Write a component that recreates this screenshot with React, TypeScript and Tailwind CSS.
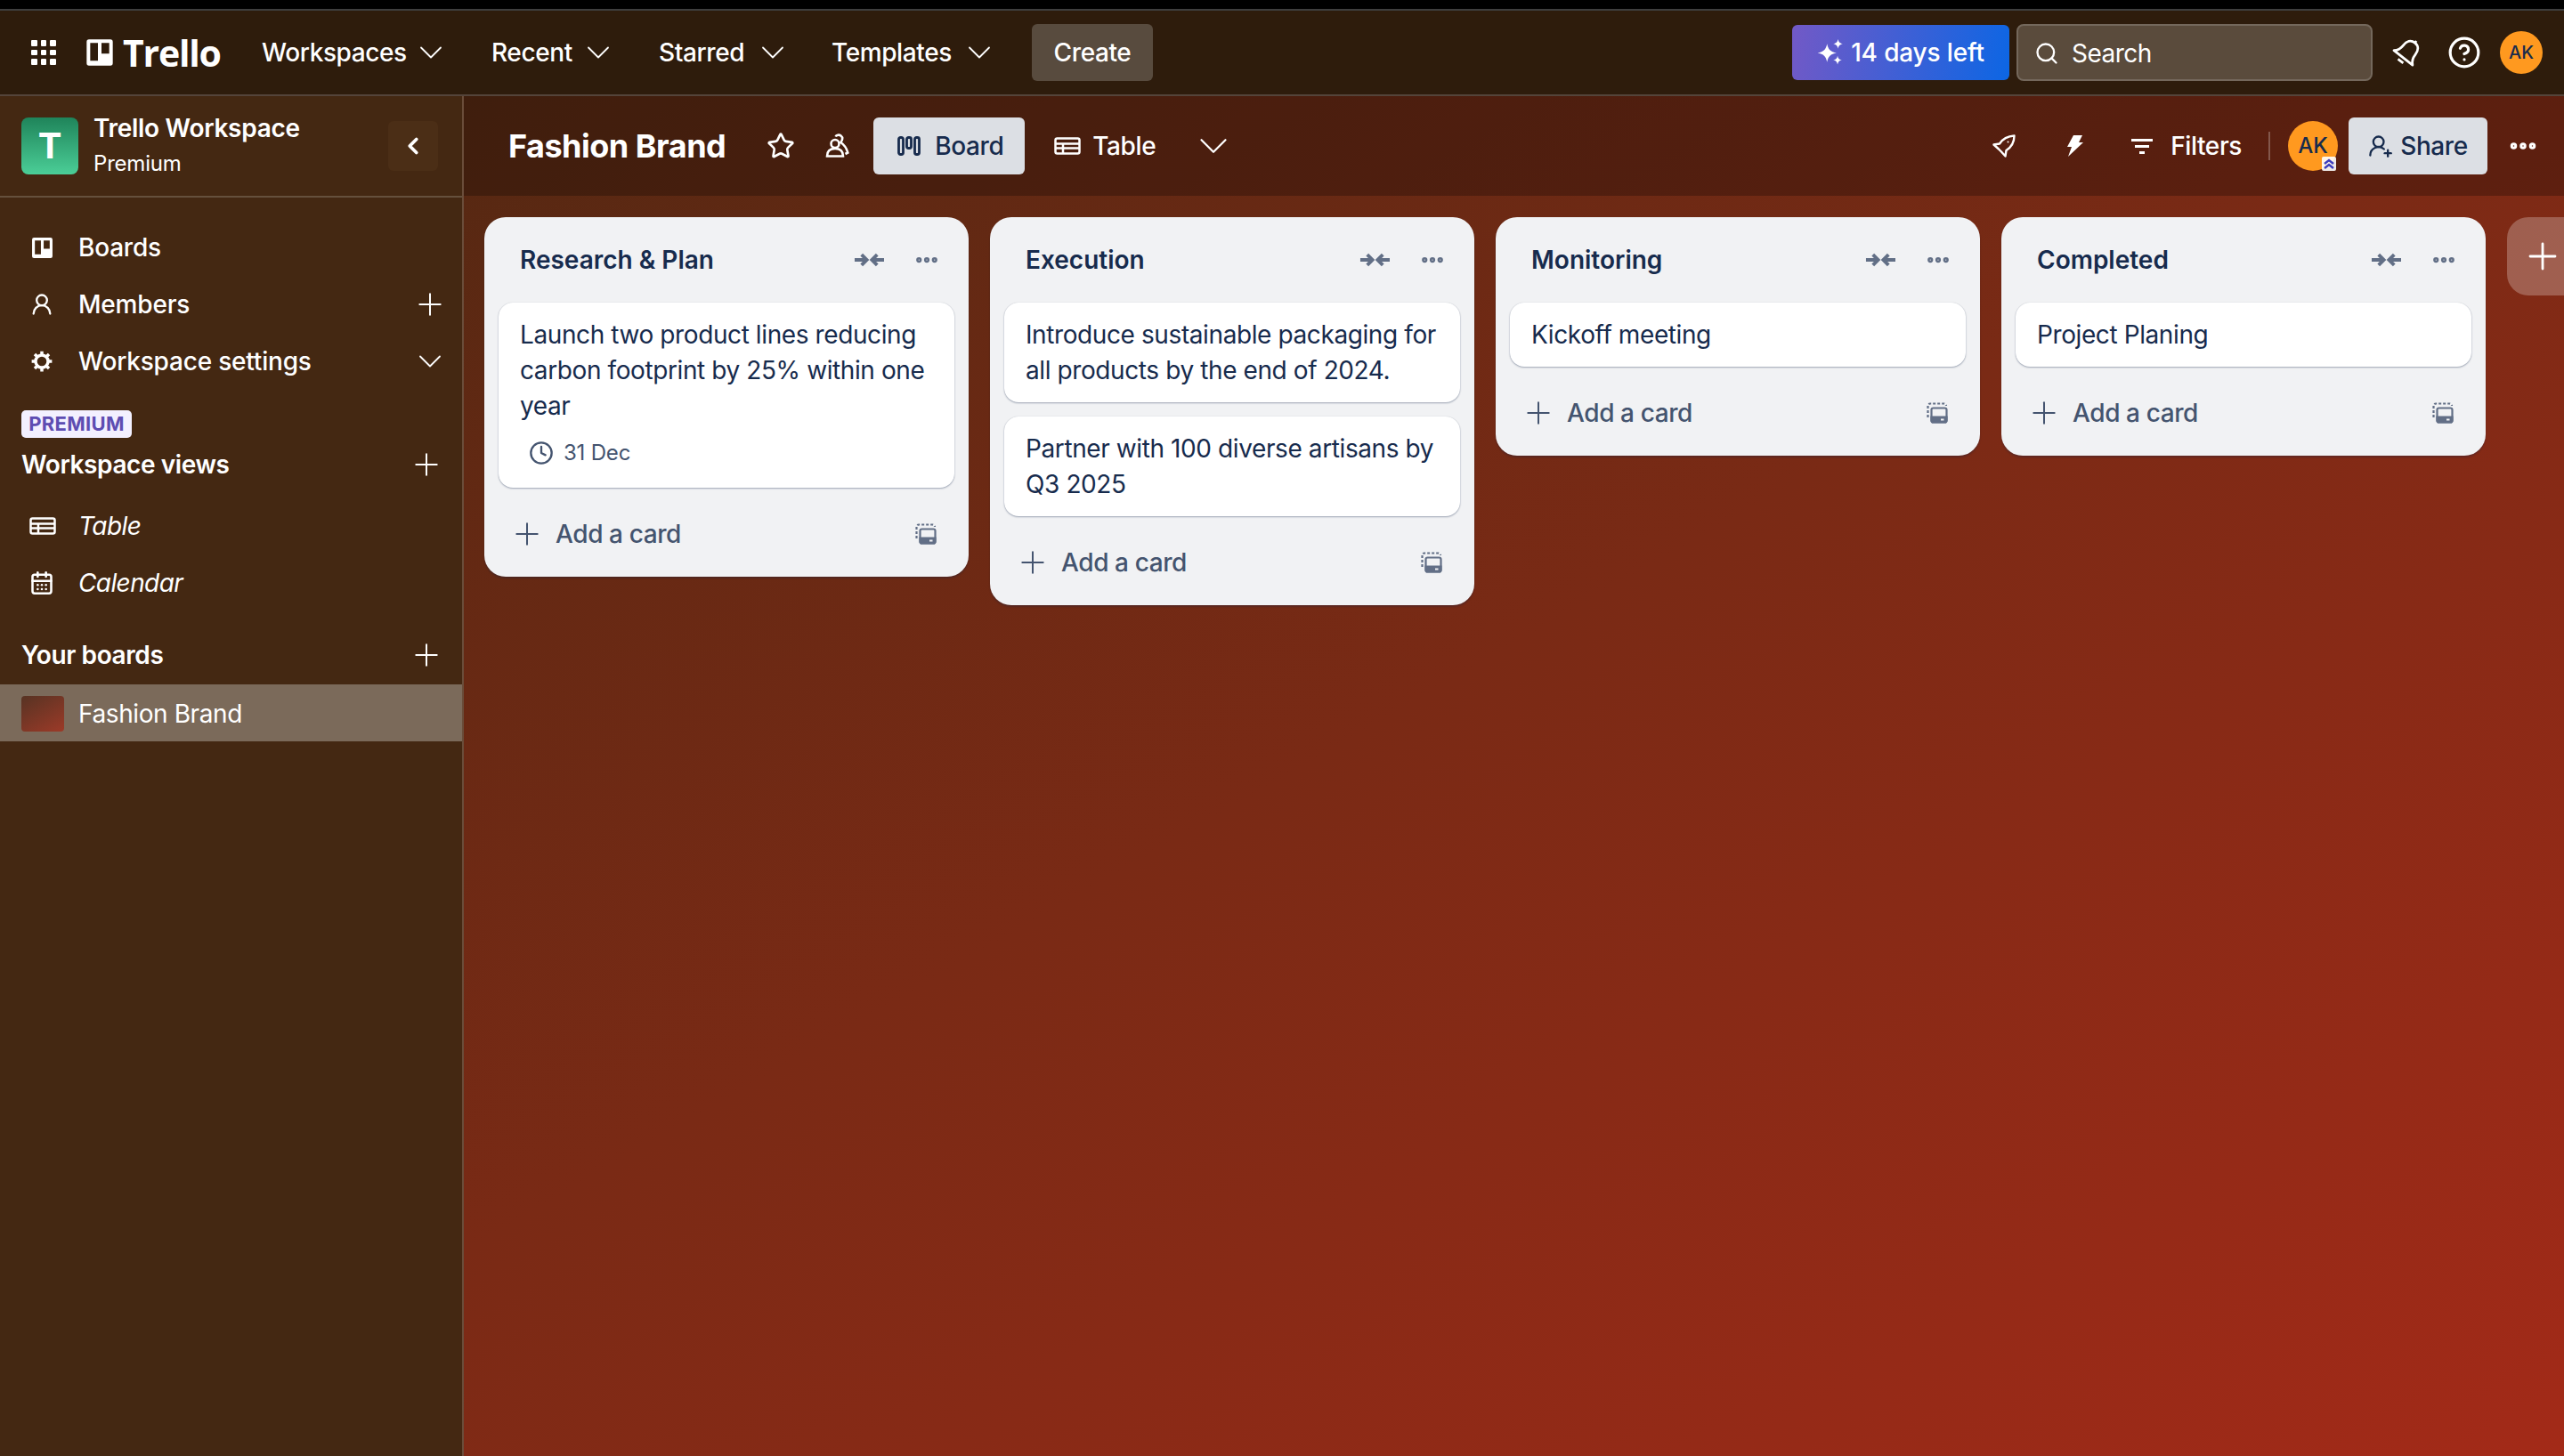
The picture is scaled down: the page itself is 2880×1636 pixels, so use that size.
import React from 'react';
import { ChevronDown, ChevronLeft, CircleHelp, Clock, Ellipsis, Plus, Search, Star, UserRound, UserRoundPlus, CalendarDays } from 'lucide-react';

const BoardsIcon = ({ className }: { className?: string }) => (
  <svg viewBox="0 0 24 24" className={className} fill="currentColor">
    <path
      fillRule="evenodd"
      d="M3 1h18a2 2 0 0 1 2 2v18a2 2 0 0 1-2 2H3a2 2 0 0 1-2-2V3a2 2 0 0 1 2-2Zm1 3v15h6.500V4H4Zm9.500 0v9H20V4h-6.500Z"
    />
  </svg>
);

const AppGrid = () => (
  <div className="grid grid-cols-3 gap-[4px] w-[28px]">
    {Array.from({ length: 9 }).map((_, i) => (
      <div key={i} className="w-[6.500px] h-[6.500px] rounded-[1px] bg-white" />
    ))}
  </div>
);

const TableIcon = ({ className }: { className?: string }) => (
  <svg viewBox="0 0 30 20" className={className} fill="none" stroke="currentColor" strokeWidth="2.500">
    <rect x="1.500" y="1.500" width="27" height="17" rx="2" />
    <path d="M1.500 7.500h27M1.500 12.500h27M10 7.500v11" />
  </svg>
);

const ColumnsIcon = ({ className }: { className?: string }) => (
  <svg viewBox="0 0 26 22" className={className} fill="none" stroke="currentColor" strokeWidth="2.800">
    <rect x="1.500" y="1.500" width="5" height="19" rx="2" />
    <rect x="10.500" y="1.500" width="5" height="12" rx="2" />
    <rect x="19.500" y="1.500" width="5" height="19" rx="2" />
  </svg>
);

const CollapseIcon = () => (
  <svg viewBox="0 0 36 18" className="w-[35px] h-[18px] text-[#626f86]" fill="none" stroke="currentColor" strokeWidth="4">
    <path d="M1 9h14M9 3 15 9l-6 6M35 9H21M27 3 21 9l6 6" />
  </svg>
);

const TemplateIcon = () => (
  <svg viewBox="0 0 24 24" className="w-[24px] h-[24px] text-[#626f86]" fill="none" stroke="currentColor" strokeWidth="2.200">
    <path d="M1.500 17V4A2.500 2.500 0 0 1 4 1.500h15.500A2.500 2.500 0 0 1 22 4" strokeDasharray="3 2" />
    <rect x="5.500" y="6.500" width="17" height="16" rx="2" />
    <path d="M5.500 16.500h17v4a2 2 0 0 1-2 2h-13a2 2 0 0 1-2-2z" fill="currentColor" />
    <rect x="16" y="18.500" width="3.500" height="2" fill="#f1f2f4" stroke="none" />
  </svg>
);

const SparkleIcon = () => (
  <svg viewBox="0 0 28 28" className="w-[30px] h-[30px]" fill="white">
    <path d="M10.500 5c1.200 6 3.500 8.300 10 9.500-6.500 1.200-8.800 3.500-10 9.500-1.200-6-3.500-8.300-10-9.500 6.500-1.200 8.800-3.500 10-9.500Z" />
    <path d="M22 0c.6 3 1.800 4.200 5 5-3.200.8-4.400 2-5 5-.6-3-1.800-4.200-5-5 3.200-.8 4.400-2 5-5ZM21.500 17.500c.6 2.800 1.700 3.900 4.500 4.500-2.800.6-3.900 1.700-4.500 4.500-.6-2.800-1.700-3.900-4.500-4.500 2.800-.6 3.900-1.700 4.500-4.500Z" />
  </svg>
);

const BellIcon = () => (
  <svg viewBox="0 0 32 32" className="ml-[22px] w-[34px] h-[34px] text-white" fill="none" stroke="currentColor" strokeWidth="2.600" strokeLinejoin="round">
    <g transform="rotate(38 16 16)">
      <path d="M16 3c-5.500 0-8 4-8 9.500 0 5.500-1.500 8-4.500 10.500h25c-3-2.500-4.500-5-4.500-10.500C24 7 21.500 3 16 3Z" />
      <path d="M16 3V0.500" />
      <path d="M12.500 27.500h7" />
    </g>
  </svg>
);

const PeopleIcon = () => (
  <svg viewBox="0 0 28 28" className="ml-[34px] w-[28px] h-[28px]" fill="none" stroke="currentColor" strokeWidth="2.600">
    <circle cx="11" cy="11.500" r="4.500" />
    <path d="M2 25.500c0-6 3-8.500 9-8.500s9 2.500 9 8.500H2Z" />
    <path d="M11.500 3.500c1-2 4-2.500 6-1 2.500 1.800 2 5-.2 7.500 4.500 3 6.500 6 8 11.500l-2.800 1.500" />
  </svg>
);

const RocketIcon = () => (
  <svg viewBox="0 0 26 26" className="w-[26px] h-[26px]" fill="none" stroke="currentColor" strokeWidth="2.400" strokeLinejoin="round">
    <path d="M24.500 1.500C17 2 11.500 5 8 10.500L1.500 11.500 7 16.500 10 19.500 14.500 24.500 15.500 18C21 14.500 24.500 9 24.500 1.500Z" />
    <circle cx="17.500" cy="8.500" r="1" fill="currentColor" stroke="none" />
  </svg>
);

const BoltIcon = () => (
  <svg viewBox="0 0 18 24" className="ml-[58px] w-[18px] h-[24px]" fill="currentColor">
    <path d="M7 0h10l-4 8h5L1 24l4-11H0L7 0Z" />
  </svg>
);

const GearIcon = () => (
  <svg viewBox="0 0 24 24" className="w-[26px] h-[26px] ml-[-1px]" fill="none" stroke="currentColor">
    <circle cx="12" cy="12" r="6.500" strokeWidth="3.200" />
    <path
      d="M12 1.500v3.500M12 19v3.500M1.500 12H5M19 12h3.500M4.600 4.600l2.400 2.400M17 17l2.400 2.400M4.600 19.400 7 17M17 7l2.400-2.400"
      strokeWidth="3.200"
    />
  </svg>
);

const NavItem = ({ label, width }: { label: string; width: string }) => (
  <div className={`flex items-center justify-between text-[28px] leading-[40px] font-medium text-white ${width}`}>
    <span className="tracking-[-0.4px]">{label}</span>
    <ChevronDown className="w-[44px] h-[44px] mr-[-10px]" strokeWidth={1} />
  </div>
);

const SideRow = ({
  icon,
  label,
  action,
  italic,
}: {
  icon: React.ReactNode;
  label: string;
  action?: React.ReactNode;
  italic?: boolean;
}) => (
  <div className="h-[64px] pl-[35px] pr-[16px] flex items-center text-[28px] leading-[40px] text-white">
    <div className="w-[53px] flex items-center">{icon}</div>
    <span className={italic ? 'italic tracking-[-0.6px]' : 'font-medium tracking-[-0.2px]'}>{label}</span>
    <div className="ml-auto">{action}</div>
  </div>
);

type CardData = { text: string[]; due?: string };
type ListData = { title: string; cards: CardData[] };

const lists: ListData[] = [
  {
    title: 'Research & Plan',
    cards: [
      {
        text: ['Launch two product lines reducing', 'carbon footprint by 25% within one', 'year'],
        due: '31 Dec',
      },
    ],
  },
  {
    title: 'Execution',
    cards: [
      { text: ['Introduce sustainable packaging for', 'all products by the end of 2024.'] },
      { text: ['Partner with 100 diverse artisans by', 'Q3 2025'] },
    ],
  },
  { title: 'Monitoring', cards: [{ text: ['Kickoff meeting'] }] },
  { title: 'Completed', cards: [{ text: ['Project Planing'] }] },
];

const BoardList = ({ list }: { list: ListData }) => (
  <div className="w-[544px] shrink-0 rounded-[24px] bg-[#f1f2f4] px-[16px] shadow-[0_2px_2px_rgba(9,30,66,0.25)]">
    <div className="h-[96px] flex items-center pl-[24px] pr-[16px]">
      <h2 className="text-[28px] leading-[40px] font-semibold text-[#172b4d]">{list.title}</h2>
      <div className="ml-auto mr-[32px]">
        <CollapseIcon />
      </div>
      <Ellipsis className="w-[30px] h-[30px] text-[#626f86]" strokeWidth={3} />
    </div>
    <div className="flex flex-col gap-[16px]">
      {list.cards.map(card => (
        <div
          key={card.text[0]}
          className="rounded-[16px] bg-white px-[24px] py-[16px] shadow-[0_1px_2px_rgba(9,30,66,0.35),0_0_1px_rgba(9,30,66,0.2)]"
        >
          <p className="text-[28px] leading-[40px] text-[#172b4d] whitespace-nowrap tracking-[-0.4px]">
            {card.text.map(line => (
              <span key={line} className="block">
                {line}
              </span>
            ))}
          </p>
          {card.due && (
            <div className="mt-[13px] mb-[3px] pl-[10px] h-[40px] flex items-center gap-[11px] text-[24px] text-[#44546f] tracking-[-0.2px]">
              <Clock className="w-[28px] h-[28px]" strokeWidth={2} />
              {card.due}
            </div>
          )}
        </div>
      ))}
    </div>
    <div className="h-[100px] pt-[4px] flex items-center pl-[12px] pr-[20px] text-[#44546f]">
      <Plus className="w-[40px] h-[40px] mr-[12px]" strokeWidth={1.2} />
      <span className="text-[28px] font-medium tracking-[-0.4px]">Add a card</span>
      <div className="ml-auto">
        <TemplateIcon />
      </div>
    </div>
  </div>
);

export default function App() {
  return (
    <div className="w-[2880px] h-[1636px] flex flex-col overflow-hidden bg-black font-['Inter',sans-serif]">
      <div className="h-[12px] shrink-0 bg-black border-b-2 border-[#3e3e3e]" />

      <header className="h-[96px] shrink-0 flex items-center bg-[#2e1c0c] border-b-2 border-[#54443a] pl-[35px] pr-[24px]">
        <AppGrid />
        <BoardsIcon className="ml-[33px] w-[32px] h-[40px] text-white" />
        <span className="ml-[10px] w-[156px] font-['Open_Sans',sans-serif] text-[41px] leading-[48px] font-bold text-white tracking-[-1.2px]">
          Trello
        </span>
        <div className="flex items-center">
          <NavItem label="Workspaces" width="w-[202px]" />
          <div className="w-[56px]" />
          <NavItem label="Recent" width="w-[132px]" />
          <div className="w-[56px]" />
          <NavItem label="Starred" width="w-[140px]" />
          <div className="w-[54px]" />
          <NavItem label="Templates" width="w-[178px]" />
        </div>
        <button className="ml-[47px] w-[136px] h-[64px] rounded-[6px] bg-[#584b3e] text-[28px] font-medium text-white tracking-[-0.4px]">
          Create
        </button>

        <div className="ml-auto flex items-center">
          <div className="w-[244px] h-[62px] rounded-[6px] flex items-center justify-center gap-[8px] bg-[linear-gradient(100deg,#7259c6,#0c66e4)] text-[28px] font-medium text-white tracking-[-0.15px]">
            <SparkleIcon />
            14 days left
          </div>
          <div className="ml-[8px] w-[400px] h-[64px] rounded-[8px] border-2 border-[#74685c] bg-[#5a4b3c] flex items-center pl-[18px] pt-[2px] text-[28px] text-white">
            <Search className="w-[28px] h-[28px]" strokeWidth={2} />
            <span className="ml-[14px] tracking-[-0.5px]">Search</span>
          </div>
          <BellIcon />
          <CircleHelp className="ml-[28px] w-[38px] h-[38px] text-white" strokeWidth={2} />
          <div className="ml-[21px] w-[48px] h-[48px] rounded-full bg-[#ff991f] flex items-center justify-center text-[20px] font-medium text-[#172b4d]">
            AK
          </div>
        </div>
      </header>

      <div className="flex-1 flex min-h-0">
        <aside className="w-[521px] shrink-0 bg-[#442812] border-r-2 border-[#6a4d3a]">
          <div className="h-[114px] border-b-2 border-[#65503c] flex items-center pl-[24px] pr-[27px]">
            <div className="w-[64px] h-[64px] rounded-[8px] bg-[linear-gradient(180deg,#1f845a,#4bce97)] flex items-center justify-center text-[40px] font-bold text-white">
              T
            </div>
            <div className="ml-[17px] mt-[-2px] text-white">
              <div className="text-[28px] leading-[40px] font-semibold tracking-[-0.3px]">Trello Workspace</div>
              <div className="mt-[2px] text-[24px] leading-[36px] tracking-[-0.2px]">Premium</div>
            </div>
            <div className="ml-auto w-[56px] h-[56px] rounded-[6px] bg-[#4b2e16] flex items-center justify-center">
              <ChevronLeft className="w-[30px] h-[30px] text-white" strokeWidth={3} />
            </div>
          </div>

          <div className="pt-[24px]">
            <SideRow icon={<BoardsIcon className="w-[25px] h-[25px]" />} label="Boards" />
            <SideRow
              icon={<UserRound className="w-[28px] h-[28px] ml-[-2px]" strokeWidth={2} />}
              label="Members"
              action={<Plus className="w-[40px] h-[40px]" strokeWidth={1.2} />}
            />
            <SideRow
              icon={<GearIcon />}
              label="Workspace settings"
              action={<ChevronDown className="w-[44px] h-[44px] mr-[-2px]" strokeWidth={1} />}
            />
          </div>

          <div className="mt-[23px] ml-[24px] w-[124px] h-[31px] rounded-[5px] bg-[#f3f0ff] flex items-center justify-center text-[22px] font-bold text-[#5e4db2] tracking-[0.3px]">
            PREMIUM
          </div>
          <div className="h-[60px] pl-[24px] pr-[20px] flex items-center text-[28px] font-semibold text-white tracking-[-0.4px]">
            Workspace views
            <Plus className="ml-auto w-[40px] h-[40px]" strokeWidth={1.2} />
          </div>
          <div className="pt-[7px]">
            <SideRow italic icon={<TableIcon className="w-[30px] h-[20px] ml-[-2px]" />} label="Table" />
            <SideRow italic icon={<CalendarDays className="w-[28px] h-[28px] ml-[-2px]" strokeWidth={2.2} />} label="Calendar" />
          </div>

          <div className="mt-[15px] h-[67px] pl-[24px] pr-[20px] flex items-center text-[28px] font-semibold text-white tracking-[-0.4px]">
            Your boards
            <Plus className="ml-auto w-[40px] h-[40px]" strokeWidth={1.2} />
          </div>
          <div className="h-[64px] bg-[#7b6a5a] flex items-center pl-[24px] pt-[1px] text-[28px] text-white tracking-[-0.4px]">
            <div className="w-[48px] h-[40px] rounded-[4px] bg-[linear-gradient(150deg,#573323,#9c3a28)]" />
            <span className="ml-[16px]">Fashion Brand</span>
          </div>
        </aside>

        <main className="flex-1 min-w-0 flex flex-col bg-[linear-gradient(150deg,#552812_0%,#7a2a15_45%,#a32a18_100%)]">
          <div className="h-[112px] shrink-0 bg-black/25 flex items-center pl-[50px] pr-[28px] text-white">
            <h1 className="text-[36px] font-bold tracking-[-0.5px]">Fashion Brand</h1>
            <Star className="ml-[46px] w-[32px] h-[32px]" strokeWidth={2} />
            <PeopleIcon />
            <div className="ml-[26px] w-[170px] h-[64px] rounded-[6px] bg-[#dcdfe4] flex items-center pl-[27px] text-[28px] font-medium text-[#172b4d] tracking-[-0.4px]">
              <ColumnsIcon className="w-[26px] h-[22px]" />
              <span className="ml-[16px]">Board</span>
            </div>
            <TableIcon className="ml-[33px] w-[30px] h-[20px]" />
            <span className="ml-[13px] text-[28px] font-medium tracking-[-0.4px]">Table</span>
            <ChevronDown className="ml-[38px] w-[54px] h-[54px]" strokeWidth={1} />

            <div className="ml-auto flex items-center">
              <RocketIcon />
              <BoltIcon />
              <svg viewBox="0 0 24 20" className="ml-[54px] w-[24px] h-[20px]" fill="currentColor">
                <path d="M0 2h24v3H0zM4 9h16v3H4zM9 16h6v3H9z" />
              </svg>
              <span className="ml-[20px] text-[28px] font-medium tracking-[-0.4px]">Filters</span>
              <div className="ml-[30px] w-[2px] h-[32px] bg-white/25" />
              <div className="relative ml-[20px] w-[56px] h-[56px] rounded-full bg-[#ff991f] flex items-center justify-center text-[24px] font-medium text-[#172b4d]">
                AK
                <svg viewBox="0 0 16 16" className="absolute right-[2px] bottom-0 w-[16px] h-[16px] rounded-[2px] bg-white/90" fill="none" stroke="#3d3dbd" strokeWidth="2.500">
                  <path d="M3 8l5-4 5 4M3 13l5-4 5 4" />
                </svg>
              </div>
              <div className="ml-[12px] w-[156px] h-[64px] rounded-[6px] bg-[#dcdfe4] flex items-center justify-center gap-[8px] text-[28px] font-medium text-[#172b4d] tracking-[-0.4px]">
                <UserRoundPlus className="w-[28px] h-[28px]" strokeWidth={2} />
                Share
              </div>
              <Ellipsis className="ml-[22px] w-[36px] h-[36px]" strokeWidth={3} />
            </div>
          </div>

          <div className="flex-1 flex items-start gap-[24px] pl-[23px] pt-[24px] overflow-hidden">
            {lists.map(list => (
              <BoardList key={list.title} list={list} />
            ))}
            <div className="w-[100px] h-[88px] shrink-0 rounded-[24px] bg-white/25 flex items-center pl-[16px]">
              <Plus className="w-[48px] h-[48px] text-white" strokeWidth={1.4} />
            </div>
          </div>
        </main>
      </div>
    </div>
  );
}
